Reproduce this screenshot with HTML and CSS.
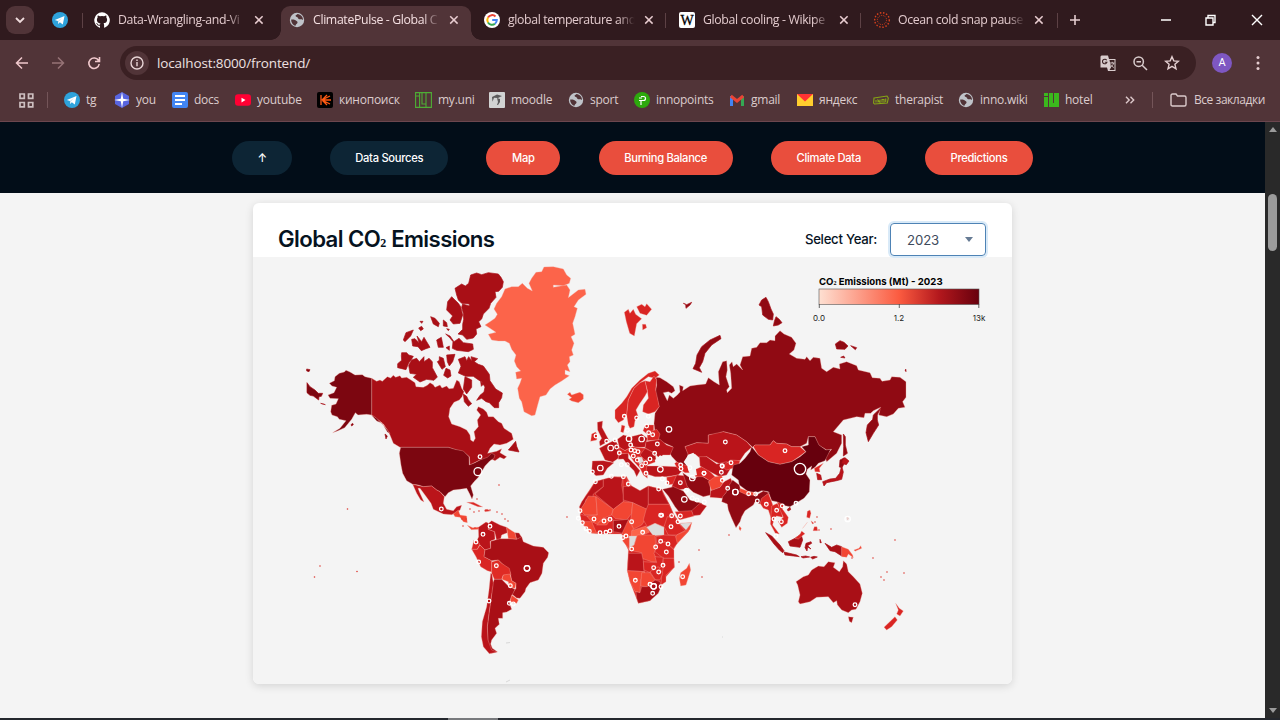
FILE: index.html
```html
<!DOCTYPE html>
<html lang="en">
<head>
<meta charset="utf-8">
<title>ClimatePulse - Global CO₂ Emissions</title>
<link rel="stylesheet" href="styles.css">
</head>
<body>
<svg width="0" height="0" class="defs">
  <defs>
    <symbol id="x" viewBox="0 0 10 10"><path d="M1.2 1.2l7.4 7.4M8.6 1.2L1.2 8.6" stroke="currentColor" stroke-width="1.5"/></symbol>
    <symbol id="tg" viewBox="0 0 16 16"><circle cx="8" cy="8" r="8" fill="#2ea3dc"/><path d="M2.800 7.900l9.700-4-1.700 8.700-3-2.300-1.600 1.600-.3-2.800z" fill="#fff"/><path d="M6 9l4-3.200-3.200 3.800-.6 1.800z" fill="#b9d8ea"/></symbol>
    <symbol id="globe" viewBox="0 0 16 16"><circle cx="8" cy="8" r="7.200" fill="#bfc3c9"/><path d="M2.200 7.500c2 0 3.500-.2 4.300.8s2.300.7 2 2.400c-.3 1.500-1.800 1-2 3-2.600-.6-4.500-3.200-4.300-6.200zM8.500 2c-1 1.200-2.300 1-1.800 2.200s2.200.5 2.300 1.800 1.800 1.400 3 1.200 1.300.9 2 .5C14 5 11.800 2.400 8.500 2z" fill="#513438"/></symbol>
  </defs>
</svg>
<header class="browser">
  <div class="tabs">
    <button class="tabmenu"><svg width="10" height="8" viewBox="0 0 10 8"><path d="M1 2l4 4 4-4" fill="none" stroke="#f0dcdd" stroke-width="1.800"/></svg></button>
    <svg class="pinned" width="16" height="16"><use href="#tg"/></svg>
    <div class="tab first"><svg width="16" height="16" viewBox="0 0 16 16"><path fill="#fff" d="M8 .2a8 8 0 0 0-2.500 15.500c.4.1.5-.2.5-.4v-1.600c-2.200.5-2.700-.9-2.700-.9-.4-.9-.9-1.200-.9-1.200-.7-.5.100-.5.100-.5.800.1 1.200.8 1.200.8.700 1.300 1.900.9 2.300.7.100-.5.300-.9.500-1.100-1.800-.2-3.600-.9-3.600-3.900 0-.9.300-1.600.8-2.100-.1-.2-.4-1 .1-2.100 0 0 .7-.2 2.200.8a7.500 7.500 0 0 1 4 0c1.500-1 2.200-.8 2.200-.8.400 1.100.2 1.900.1 2.100.5.600.8 1.300.8 2.100 0 3-1.800 3.700-3.600 3.900.3.300.6.800.6 1.500v2.300c0 .2.100.5.500.4A8 8 0 0 0 8 .2z"/></svg><span>Data-Wrangling-and-Vi</span><svg class="close" width="10" height="10"><use href="#x"/></svg></div>
    <div class="tab active"><svg width="16" height="16"><use href="#globe"/></svg><span>ClimatePulse - Global C</span><svg class="close" width="10" height="10"><use href="#x"/></svg></div>
    <div class="tab"><svg width="16" height="16" viewBox="0 0 16 16"><circle cx="8" cy="8" r="8" fill="#fff"/><g fill="none" stroke-width="2"><path d="M11.500 4.500A4.800 4.800 0 0 0 4 5.500" stroke="#ea4335"/><path d="M4 5.500a4.800 4.800 0 0 0 0 5" stroke="#fbbc05"/><path d="M4 10.500a4.800 4.800 0 0 0 7 1.200" stroke="#34a853"/><path d="M11 11.700A4.800 4.800 0 0 0 12.800 8H8.200" stroke="#4285f4"/></g></svg><span>global temperature and</span><svg class="close" width="10" height="10"><use href="#x"/></svg></div>
    <div class="tab sep"><svg width="16" height="16" viewBox="0 0 16 16"><rect width="16" height="16" rx="2" fill="#fff"/><text x="8" y="13" text-anchor="middle" class="wiki">W</text></svg><span>Global cooling - Wikipe</span><svg class="close" width="10" height="10"><use href="#x"/></svg></div>
    <div class="tab sep"><svg width="16" height="16" viewBox="0 0 16 16" fill="none" stroke="#d8401c"><circle cx="8" cy="8" r="7.300" stroke-width="1.400" stroke-dasharray="1.500 1.700"/><circle cx="8" cy="8" r="4.600" stroke-dasharray="1 1"/></svg><span>Ocean cold snap pause</span><svg class="close" width="10" height="10"><use href="#x"/></svg></div>
    <div class="newtab"><svg width="12" height="12" viewBox="0 0 12 12"><path d="M6 1v10M1 6h10" stroke="#e5cdd0" stroke-width="1.600"/></svg></div>
    <div class="window"><svg width="104" height="14" viewBox="0 0 104 14" fill="none" stroke="#fff" stroke-width="1.400"><path d="M1 7h10M46 5h7v7h-7zM48 4.500V2.500h7v7h-1.500M92 2l10 10M102 2L92 12"/></svg></div>
  </div>
  <div class="toolbar">
    <div class="controls">
      <svg width="14" height="14" viewBox="0 0 14 14" fill="none" stroke="#f0c8cc" stroke-width="1.500"><path d="M13 7H2M7 1.500L1.500 7 7 12.500"/></svg>
      <svg width="14" height="14" viewBox="0 0 14 14" fill="none" stroke="#967376" stroke-width="1.500"><path d="M1 7h11M7 1.500L12.500 7 7 12.500"/></svg>
      <svg width="14" height="14" viewBox="0 0 14 14" fill="none" stroke="#f0c8cc" stroke-width="1.600"><path d="M11.500 4.500A5.200 5.200 0 1 0 12.200 8M12.500 1v4.500H8"/></svg>
    </div>
    <div class="address">
      <i><svg width="14" height="14" viewBox="0 0 14 14" fill="none" stroke="#e8d5d6" stroke-width="1.400"><circle cx="7" cy="7" r="6"/><path d="M7 6v4.200M7 3.500V5"/></svg></i>
      <span class="url">localhost:8000/frontend/</span>
      <div class="actions">
        <svg width="17" height="17" viewBox="0 0 17 17"><path d="M1.500.5H8L9 4h6.500v12H8l-1-3.500H.5V1.500z" fill="#d9cccd"/><path d="M9.500 5h5v10H9.500l1.500-2.500z" fill="#3a2023"/><path d="M6.700 5.200A2.300 2.300 0 1 0 7 7.200H4.800" fill="none" stroke="#3a2023" stroke-width="1.100"/><path d="M10 8h4.500M12.200 6.800V8M13.500 8c0 2-2 3.500-3 4M10.800 9.500c.5 1.500 2 2.500 3 3" fill="none" stroke="#d9cccd" stroke-width=".9"/></svg>
        <svg width="15" height="15" viewBox="0 0 15 15" fill="none" stroke="#d9cccd" stroke-width="1.500"><circle cx="5.700" cy="5.700" r="4.700"/><path d="M9.200 9.200L14 14M3.500 5.700H8"/></svg>
        <svg width="16" height="16" viewBox="0 0 16 16" fill="none" stroke="#e5d0d2" stroke-width="1.400"><path d="M8 1.700l1.800 4.200 4.600.4-3.500 3 1.100 4.500L8 11.400l-4 2.400 1.100-4.500-3.500-3 4.600-.4z"/></svg>
      </div>
    </div>
    <b class="avatar">A</b>
    <svg class="dots" width="4" height="16" viewBox="0 0 4 16" fill="#e5cdd0"><circle cx="2" cy="2.500" r="1.500"/><circle cx="2" cy="8" r="1.500"/><circle cx="2" cy="13.500" r="1.500"/></svg>
  </div>
  <div class="bookmarks">
    <a class="apps"><svg width="15" height="15" viewBox="0 0 15 15" fill="none" stroke="#cdbfc0" stroke-width="1.700"><path d="M1 1h4.300v4.300H1zM9.500 1h4.300v4.300H9.500zM1 9.500h4.300v4.300H1zM9.500 9.500h4.300v4.300H9.500z"/></svg></a>
    <a><svg width="16" height="16"><use href="#tg"/></svg><span>tg</span></a>
    <a><svg width="16" height="16" viewBox="0 0 16 16"><path d="M8 0l7 4v8l-7 4-7-4V4z" fill="#5865e0"/><path d="M8 0l1.200 6.800L16 8l-6.800 1.200L8 16 6.800 9.200 0 8l6.800-1.200z" fill="#fff"/></svg><span>you</span></a>
    <a><svg width="16" height="16" viewBox="0 0 16 16"><rect width="16" height="16" rx="2" fill="#4285f4"/><path d="M3 4h10M3 8h10M3 12h7" stroke="#fff" stroke-width="2"/></svg><span>docs</span></a>
    <a><svg width="16" height="16" viewBox="0 0 16 16"><rect y="2.300" width="16" height="11.500" rx="3" fill="#ff0033"/><path d="M6.500 5.700v4.700l4-2.350z" fill="#fff"/></svg><span>youtube</span></a>
    <a><svg width="16" height="16" viewBox="0 0 16 16"><rect width="16" height="16" rx="2" fill="#000"/><path d="M4 3v10M5 8l5-5M5 8l5 5M5 8l8-4M5 8l8 4M5 8h9" stroke="#ff5a13" stroke-width="1.300"/></svg><span>кинопоиск</span></a>
    <a><svg width="17" height="16" viewBox="0 0 17 16" fill="none" stroke="#4eae35" stroke-width="1.100"><path d="M.6.600h15.800v14.800H.6zM.6 4h4v11.400M4.600.600V4M7 .600v11.400h4V.600M11 .600v15"/></svg><span>my.uni</span></a>
    <a><svg width="16" height="16" viewBox="0 0 16 16"><rect width="16" height="16" rx="1" fill="#d2d3d3"/><path d="M3 5l5-2.500L13 4l-4 2-4-.2-1.500 4zM8 6l3 1v3l-2 3H8l1-3z" fill="#5c5b5c"/></svg><span>moodle</span></a>
    <a><svg width="16" height="16"><use href="#globe"/></svg><span>sport</span></a>
    <a><svg width="16" height="16" viewBox="0 0 16 16"><circle cx="8" cy="8" r="8" fill="#2da90d"/><path d="M7 13V8M7 4.500h2.500a2 2 0 0 1 0 4H5M5 6h3" fill="none" stroke="#fff" stroke-width="1.200"/></svg><span>innopoints</span></a>
    <a><svg width="16" height="16" viewBox="0 0 16 16" fill="none" stroke-width="3"><path d="M2.500 14V4" stroke="#4285f4"/><path d="M13.500 14V4" stroke="#34a853"/><path d="M1.800 4L8 9l6.200-5" stroke="#ea4335"/></svg><span>gmail</span></a>
    <a><svg width="16" height="16" viewBox="0 0 16 16"><path d="M0 2h16v12H0z" fill="#ffce2e"/><path d="M0 2h16L8 9.500z" fill="#f33"/></svg><span>яндекс</span></a>
    <a><svg width="16" height="16" viewBox="0 0 16 16" fill="none" stroke="#86a714" stroke-width="1.100"><path d="M1 6l13-2 1.300 2-1 5-12.800 1L.6 11zM3 10.500V8M5 10.500V8l2 2.500V7.500M9 10.500v-3h2v3M12.700 10V6.500"/></svg><span>therapist</span></a>
    <a><svg width="16" height="16"><use href="#globe"/></svg><span>inno.wiki</span></a>
    <a><svg width="15" height="16" viewBox="0 0 15 16"><path d="M0 1h4v3H0zM0 5h4v10H0zM5 1h4v10h1V1h5v14H5z" fill="#3bb81d"/></svg><span>hotel</span></a>
    <a class="more"><svg width="10" height="8" viewBox="0 0 10 8" fill="none" stroke="#ddc9cb" stroke-width="1.400"><path d="M1 .8L4.200 4 1 7.200M5.500.8L8.700 4 5.500 7.200"/></svg></a>
    <a class="all"><svg width="17" height="14" viewBox="0 0 17 14" fill="none" stroke="#dac9ca" stroke-width="1.400"><path d="M1 2.500Q1 1 2.500 1H6l1.500 2h7Q16 3 16 4.500v7q0 1.500-1.500 1.500h-12Q1 13 1 11.500z"/></svg><span>Все закладки</span></a>
  </div>
</header>
<div class="viewport">
<main>
  <nav>
    <a class="dark">↑</a><a class="dark">Data Sources</a><a>Map</a><a>Burning Balance</a><a>Climate Data</a><a>Predictions</a>
  </nav>
  <section class="card">
    <div class="cardhead">
      <h1>Global CO<small>2</small> Emissions</h1>
      <label>Select Year:</label>
      <div class="select">2023<svg width="8" height="5"><path d="M0 0h8L4 5z" fill="#667b94"/></svg></div>
    </div>
    <svg class="map" viewBox="253 257 759 427">
      <defs>
        <linearGradient id="reds"><stop stop-color="#fee0d2"/><stop offset=".5" stop-color="#fb5b40"/><stop offset=".75" stop-color="#b3181d"/><stop offset="1" stop-color="#67000d"/></linearGradient>
        <marker id="s" markerUnits="userSpaceOnUse" markerWidth="20" markerHeight="20" refX="10" refY="10"><circle cx="10" cy="10" r="5.500" fill="none" stroke="#fff" stroke-width="3.800"/></marker>
        <marker id="m" markerUnits="userSpaceOnUse" markerWidth="30" markerHeight="30" refX="15" refY="15"><circle cx="15" cy="15" r="8.300" fill="none" stroke="#fff" stroke-width="3.600"/></marker>
      </defs>
      <g class="land c" transform="translate(300 260) scale(.33333)">
        <path d="M215 355L230 364 240 360 247 364 262 350 272 354 280 346 287 352 300 347 305 354 320 352 333 360 345 368 348 380 370 382 382 376 390 368 400 374 405 382 420 375 426 384 440 378 447 386 460 385 466 370 470 360 478 365 485 385 492 395 486 410 478 420 462 427 450 445 446 470 455 492 480 500 500 510 510 525 512 540 520 545 526 535 522 515 535 500 532 480 542 465 530 450 535 440 550 447 560 457 565 470 580 470 595 485 605 490 612 505 635 520 640 538 620 550 600 555 582 552 570 565 563 580 590 574 605 566 600 578 620 590 612 597 600 592 585 602 570 595 540 600 510 615 508 590 490 575 470 570 445 562 300 562 280 550 270 525 262 510 250 492 235 480 215 465z"/>
        <path class="us" d="M215 355L195 350 187 344 165 345 150 336 138 331 133 336 118 340 105 350 103 362 88 370 96 378 110 382 102 398 84 405 90 415 115 416 108 432 95 436 92 455 96 465 112 470 118 478 138 482 120 505 98 518 114 512 134 503 155 478 166 458 174 465 200 463 215 465 230 475 250 495 270 520 262 516 247 490 230 483 215 466z"/>
        <g class="isle"><path class="us" d="M21 368L30 380 45 390 55 400 68 400 64 409 57 410 56 420 40 408 30 406 21 398zM20 327l10 2-3 6-7-2zM62 430l14 4zM153 494l5-4 2 4-5 4zM255 522l7 6-4 9z"/>
        <path d="M512 45L530 39 545 44 565 38 595 42 603 52 610 65 607 82 596 94 585 95 588 112 572 130 567 145 550 162 545 177 536 185 543 200 528 207 530 222 520 234 500 238 488 225 474 222 488 208 488 193 491 178 490 160 485 142 488 132 508 138 508 132 485 130 475 120 470 105 465 85 485 72 496 78 506 70zM455 110L475 130 482 140 488 165 480 190 460 192 450 180 458 168 440 150 443 125zM392 170L405 175 418 190 415 200 400 192zM430 180l10 8 2 12-12-2zM310 240l8-22 22-8-8 18-17 17zM335 238l10-2 12 12-6-20 14 17 7-13 8 13 10 17-14 5-12 5-10-12-16-2zM356 204l9-5 5 8-8 5zM360 184l9 0-4 6zM410 240l14-8 6 30-15 0zM438 263l10-5v13zM437 222l13 6 12 17 15-10 13 13 28 4 2 16-15 7-35-4-13-6 2-20-10-12zM305 278l15 0 6 7 14 4-6 10-8 10-8 20-25-6 0-12 12-10-1-14zM335 300l15-5 8 10 14-15 0 15 15-10 10 10 0 18 15 28-10 10-22-3-20 8-20-14 10-9-20-3-4-24zM418 290l12 5 6 25-10 8-14-23 6-4zM440 285l25-2-7 22-10 13-6-13zM438 325l12 5 3 18-10 6-12-8zM475 298l20-8 5 12 6-12 10 14-3-14 20 6-10 9 12 8 15 5 18 25 2 19 17 25 20 12-2 14-9 15 0 15-13 0-15-15-10-3-13-10-15 6 10-15 12-10 3-15-10-15-15-10-10-7-23 0-22-10 8-20zM495 350l20 10 0 22-15 20-10-15zM490 402l10 7 5 10 10 12-10 8-12-14zM637 556l10-12 3 15 7 17-16-3-16-3zM542 365l8 8-6 6zM440 206l8 2-3 4z"/></g>
      </g>
      <g class="land c" transform="translate(400 440) scale(.33333)">
        <path class="us" d="M2 22H145L165 28 190 33 207 50 208 75 225 68 240 60 262 52 275 40 285 45 282 55 270 62 255 78 245 95 235 112 222 125 212 138 220 165 216 177 208 160 200 145 180 148 160 150 145 158 135 170 120 155 110 150 95 138 70 140 55 135 38 133 20 122 8 100 3 75 -2 40z"/>
        <path class="a" d="M38 133L70 140 95 138 110 150 120 155 133 170 130 190 140 208 160 212 170 200 185 196 180 210 168 218 155 224 130 222 100 208 93 190 75 165 60 145 54 145 60 160 72 186 62 180 50 160z"/>
        <path class="e" d="M160 222l15-12 5 15 20 3 2 20-12-3-10-13-15-2zM202 256l16 7 20-2-2 7-22 1z"/><path class="b" d="M200 187l20 0 28 14-14-1-22-9zM253 210l10-2 8 5-16 2z"/>
        <path class="a" d="M235 262L258 246 266 250 265 268 284 275 285 298 270 304 272 325 255 330 240 315 228 308 236 290z"/><path class="a" d="M266 250L275 242 300 255 320 262 322 278 305 285 302 296 290 302 284 275 265 268z"/><path class="e" d="M320 262L345 278 350 298 325 296z"/><path d="M345 278L357 279 366 293 350 298z"/><path class="b" d="M222 300L240 312 232 328 215 328z"/><path class="b" d="M215 328L232 328 240 315 255 330 252 350 275 362 275 396 262 392 242 380 228 350z"/>
        <path d="M272 304L300 296 325 296 350 298 365 290 370 305 400 318 430 322 446 338 443 352 430 370 426 400 415 420 390 428 378 445 375 455 360 475 350 474 335 462 348 445 348 430 335 422 330 395 305 370 295 360 275 362 252 350 255 330 272 325z"/>
        <path class="e2" d="M275 366L295 360 305 370 328 385 333 405 310 405 305 418 283 418 275 400z"/><path class="e" d="M310 405L330 402 335 422 348 430 345 445 328 442 325 425 306 418z"/>
        <path d="M283 418L305 418 325 438 345 448 335 468 328 488 335 508 320 516 308 518 308 535 295 535 298 553 285 565 290 580 275 600 272 612 277 625 292 635 275 640 264 615 262 560 267 520 274 470 278 430z"/><path class="a" d="M272 400L276 402 280 430 274 470 267 520 262 560 264 600 275 630 292 636 268 641 250 620 244 590 247 545 260 500 267 450z"/><path class="e" d="M335 465L355 480 350 490 330 488z"/>
      </g>
      <g class="land gl" transform="translate(470 255) scale(.33333)">
        <path d="M45 210L60 200 75 190 82 178 72 162 80 145 95 125 105 102 125 95 145 95 157 85 172 100 187 108 177 85 185 70 198 52 215 50 222 36 250 35 280 42 290 60 302 70 298 85 280 92 250 90 250 97 290 90 300 105 295 128 325 105 345 103 348 118 325 135 312 155 322 160 315 185 308 205 315 238 303 245 312 265 305 285 310 300 298 305 300 320 292 330 300 350 285 345 285 358 298 362 275 378 255 390 240 402 228 420 210 425 203 450 195 480 185 482 162 470 155 440 148 430 143 400 150 385 155 370 140 372 137 352 152 348 140 335 133 318 138 300 125 283 118 265 105 258 85 258 65 255 55 238 78 232 60 220z"/>
        <path class="e" d="M292 418l8-6 5 8 15-5 10-3 10 7 0 13-15 11-20-5-8-5 8-5z"/><path class="b" d="M463 172l12-9 5 12 10-12 7 15 18 13-15 15-7 37-14-8-10-35zM500 155l15-7 10 7 5-9 15 17-15 18-20-6zM517 208l10 0 3 10-12 7z"/>
      </g>
      <g class="land ru" transform="translate(640 290) scale(.33333)">
        <path d="M48 262L60 263 80 275 100 290 105 302 95 310 85 305 70 308 82 332 88 315 100 325 112 315 120 306 118 285 130 290 128 302 150 288 170 285 197 282 205 263 222 275 238 285 235 245 248 215 260 212 262 240 258 260 268 290 260 300 262 308 275 295 272 250 268 225 276 215 280 230 290 222 308 240 300 225 308 200 330 198 335 175 350 172 360 158 380 158 390 150 405 152 405 138 420 122 432 132 455 142 468 160 462 180 448 192 470 205 495 208 500 200 510 212 520 202 540 205 545 235 560 245 580 232 600 237 598 222 620 215 650 227 655 240 690 248 697 263 720 265 726 274 750 270 755 260 780 262 798 275 798 322 788 335 795 352 775 355 760 372 740 380 716 375 722 352 700 362 692 370 675 370 672 383 650 380 610 390 580 425 605 435 605 460 590 490 560 515 555 500 575 478 560 480 535 465 525 440 505 440 500 460 480 470 455 470 440 462 410 460 400 452 390 465 345 465 338 472 320 455 290 435 250 425 230 432 205 435 205 460 170 458 135 470 145 490 140 510 148 530 125 528 110 515 96 500 82 480 98 470 75 460 60 455 45 430 42 400 45 370 57 350 50 320 45 310 50 285z"/>
        <g class="isle"><path d="M722 354L712 375 712 390 716 405 700 430 685 455 678 428 682 405 698 388 700 375zM610 432l6 8 0 25 6 25-12 8 1-28zM600 510l12-6 12 8-10 6-8 15-8-2zM240 136l3 10-28 19-20 25-7 25-10 18 7 14-26-11 8-16 4-25 14-25 25-20zM378 22l7 13 8 22 7 15-2 18-13-2-17-13-3-25-8-5 8-15zM408 80l10 8 8 10-11 7-15 3 3-14zM130 40l10 4 15-7-5 8-12 10-1-12zM586 162l14-10 12 5 12 11-9 10-25-1zM632 167l18 6-4 6zM602 202l9-4 4 6zM795 240l3-2v7z"/></g>
        <path class="a" d="M135 470L170 458 205 460 205 435 250 425 290 435 320 455 335 472 315 490 300 512 270 515 240 522 225 515 200 500 180 505 165 492 145 495z"/>
        <path class="b" d="M340 470L345 465 390 465 400 452 410 460 440 462 455 470 480 470 497 485 480 498 455 515 420 523 385 515 355 495z"/>
      </g>
      <g class="land a" transform="translate(560 360) scale(.33333)">
        <path class="b" d="M165 150L185 130 200 110 215 85 240 60 265 40 285 33 298 45 285 55 265 50 240 68 222 85 205 120 200 165 190 180 175 188 165 175z"/><path class="b" d="M255 62L240 68 222 85 205 120 200 165 205 195 210 205 222 200 225 182 235 170 228 150 240 130 255 108 262 95 258 75z"/><path class="b" d="M255 62L270 65 282 48 290 60 287 90 298 140 285 155 265 162 248 155 250 135 265 115 262 90z"/>
        <path d="M112 187L128 183 126 202 140 228 148 242 120 258 118 245 125 235 113 210z"/><path class="b" d="M95 222l12-6 5 8-2 16-18 4zM185 195l10 3-5 20-8-3z"/>
        <path d="M118 265L145 250 165 240 178 262 175 295 158 307 135 300z"/><path d="M97 303L130 302 162 308 142 325 130 345 108 347 95 335z"/><path d="M172 238L190 225 212 230 215 260 195 272 178 262z"/><path d="M212 230L245 222 262 235 255 262 225 262 215 255z"/><path d="M175 282L205 278 205 295 228 318 240 332 230 350 222 332 198 308 190 297 175 298z"/><path class="b" d="M256 195l25 0 0 22-20 5-12-10z"/><path class="b" d="M262 218L290 208 300 222 295 240 262 242z"/><path d="M258 245L300 238 320 255 340 262 330 285 308 285 300 298 285 280 270 275 255 265z"/>
        <path class="b" d="M178 262L195 272 215 260 258 265 285 280 288 305 262 315 262 355 250 345 240 325 222 305 205 280 175 282z"/><path d="M255 265L285 280 288 300 255 300 240 285z"/><path class="grey" d="M232 290l14 2 5 13-14 7z"/>
        <path d="M260 318L300 318 350 320 368 330 355 345 320 350 285 350 260 342z"/><path class="b" d="M340 303L360 310 388 320 390 338 375 338 350 322z"/>
        <path class="b" d="M320 352L355 345 342 372 322 375z"/><path d="M350 345L375 347 385 385 355 390 335 380z"/>
        <path class="ru" d="M368 338L385 350 400 358 420 345 450 362 452 405 430 410 400 397 382 380z"/><path class="b" d="M402 330L425 320 445 330 470 355 458 368 430 350 402 350z"/><path d="M418 290L440 290 470 312 500 305 512 325 500 345 478 350 450 335 420 318z"/><path class="b" d="M485 320L512 300 540 302 535 320 500 330z"/>
        <path class="ru" d="M308 388L340 380 370 393 390 420 425 430 432 445 400 455 368 470 345 440 325 408z"/><path class="b" d="M345 455l50-3 8 16-45 12z"/><path d="M420 430l20 8-20 27-20 2-5-15z"/>
        <path class="f" d="M385 284l15-6 9 12-8 15 6 18 4 22-16 5-10-18-2-12-12-14zM285 300l15-14 20 8 12-7 3 8 14 12-15 9-25-3-22 2z"/>
      </g>
      <g class="land e" transform="translate(560 470) scale(.33333)">
        <path class="b" d="M105 35L160 20 200 20 215 48 240 62 265 48 305 58 328 103 340 130 358 160 395 158 385 185 350 222 340 240 343 292 318 320 303 350 270 392 235 400 210 335 202 302 205 240 188 205 185 192 120 192 65 160 60 120 75 80z"/>
        <path class="a" d="M105 35L130 28 130 50 100 72 98 85 78 88 75 98 60 125 58 110 65 95 90 60z"/><path class="a" d="M130 28L160 20 188 22 185 45 190 75 190 95 160 118 105 72 130 50z"/><path class="b" d="M188 20l12 0 5 30-15 5z"/><path class="a" d="M190 50L215 48 240 62 265 48 265 122 218 98 190 90z"/><path class="a" d="M265 48L305 58 312 75 328 103 265 103z"/>
        <path d="M75 98L85 78 108 80 112 135 75 135 60 120z"/><path d="M108 80L160 118 155 135 130 145 110 165 90 155 80 138 112 135z"/><path d="M160 118L190 95 218 98 215 130 200 150 165 145 155 135z"/><path d="M218 98L262 118 255 150 245 165 220 178 212 150 215 130z"/><path class="b" d="M265 103L328 103 340 130 325 155 310 170 285 160 262 170 250 150 258 120z"/>
        <path class="b" d="M60 132L80 138 95 155 110 162 130 145 160 150 160 188 120 192 95 190 65 160z"/><path d="M65 155L95 155 110 190 90 188zM110 165L130 145 150 150 140 165z"/><path class="c" d="M160 152L205 148 208 165 188 190 160 185z"/><path d="M205 150L220 175 215 200 190 197 187 188z"/><path class="gl" d="M215 182L258 168 268 187 240 198 215 205z"/>
        <path class="grey" d="M260 172L285 160 312 172 312 195 280 197z"/><path class="grey" d="M358 160L395 158 378 180z"/><path class="b" d="M322 140L350 145 360 165 375 182 350 195 325 195 312 170z"/><path d="M395 158L390 178 350 222 345 205 350 195 378 182z"/><path class="b" d="M288 200L312 195 346 197 352 220 340 236 315 215 290 220z"/>
        <path d="M232 195L285 195 288 235 282 250 292 275 275 275 245 265 245 248 205 240 222 225z"/><path class="grey" d="M208 198l22 0-8 27-17 10-5-22z"/><path d="M188 203l20 0 0 35-20-25z"/><path class="b" d="M290 222L315 216 342 240 342 265 310 265 285 245z"/>
        <path class="a" d="M205 250L245 250 250 272 252 305 202 302z"/><path class="b" d="M250 275L290 278 285 260 310 262 305 290 270 308 252 300z"/><path class="b" d="M310 265L342 265 343 292 318 315 318 335 303 345 305 320 310 290z"/><path class="b" d="M270 305L295 290 308 310 300 330 285 328z"/><path d="M202 302L255 305 242 330 240 368 225 365 210 335z"/><path d="M245 308L270 308 285 330 260 350 242 348z"/><path class="c" d="M228 365L240 368 245 350 262 350 285 330 300 335 303 350 295 370 270 392 235 400 230 385z"/><path d="M388 280L392 300 378 345 362 348 358 325 362 308 380 295z"/>
      </g>
      <g class="land a" transform="translate(700 430) scale(.33333)">
        <path class="e" d="M25 155L45 140 65 137 72 155 60 172 35 182z"/><path d="M32 182L60 172 72 155 92 145 98 158 78 190 68 205 30 202z"/>
        <path class="ch" d="M97 120L100 105 120 100 135 85 150 65 155 50 175 75 205 95 240 103 275 95 300 80 318 65 305 50 325 45 325 20 345 20 357 45 378 60 392 58 375 92 355 100 345 112 332 120 335 108 322 118 318 132 330 150 328 185 312 205 290 218 270 230 245 225 230 215 215 212 205 185 185 182 170 188 145 185 118 165 115 150 95 135z"/>
        <path class="ru" d="M65 215L68 200 78 188 88 165 98 150 118 165 122 180 145 192 170 195 190 183 208 188 190 205 180 222 165 215 160 225 135 242 125 260 120 275 108 293 95 265 85 240 82 222z"/><path class="e" d="M120 175l28 10 18 3-2 8-25-2-20-9z"/>
        <path class="b" d="M185 205L205 190 215 215 222 235 215 245 220 278 212 262 205 240 190 235 180 220z"/><path class="b" d="M215 228L232 220 245 245 248 262 230 258 222 265 218 285 238 312 226 310 211 282z"/><path class="b" d="M232 216L250 223 248 238 265 262 262 280 245 292 235 275 250 262 240 240z"/>
        <path class="b" d="M343 115L370 100 358 115 360 126 345 125z"/>
        <g class="isle"><path d="M350 130l12 5 3 14-12 0zM430 85l5-2 12 10-8 11-14-4zM425 108l5 18-5 22-15 4-30 6-8 10-4-13 22-8 17-2 12-15zM262 238l8-6 2 7-8 4z"/>
        <path class="c" d="M197 308L215 318 240 345 252 362 248 368 238 360 222 342zM252 366L290 375 298 380 255 375zM265 335L285 325 303 312 308 330 300 352 270 348zM318 340l15-5 2 5-12 7 10 10-10-6-2 12-6-10zM375 340L395 352 410 345 425 350 425 378 405 365 390 362zM303 380l14-2 12 3-20 3zM332 382l10-3 10 2-14 6zM360 328l4 10-4 0z"/></g><path class="b" d="M285 325l15-12 5-10 10 8-10 8-10 8zM322 244l8-4 3 10-4 15-9-3zM333 272l9 8-5 2zM343 290l8 0 2 12-14 0zM308 295l14-18z"/><path class="e" d="M425 350L445 358 458 375 460 383 445 372 440 382 425 380zM462 360l15-5 5-8 3 8-20 9zM118 288l6 7-3 7-4-5z"/>
        <path class="c" d="M293 465L288 455 310 440 325 435 335 420 355 408 372 410 385 395 405 398 400 412 418 425 428 410 430 392 440 402 445 425 460 440 480 462 487 490 480 515 468 538 455 540 445 548 425 540 412 524 410 512 400 518 385 500 350 502 330 515 300 522 295 515 300 495zM445 560L460 562 455 578 448 574z"/><path class="b" d="M587 520L598 535 610 543 600 558 590 552 595 540zM585 560L592 570 575 590 560 600 552 592z"/>
        <path class="grey" d="M440 262l6 2-3 6z"/>
      </g>
      <g class="pins" transform="translate(560 360) scale(.33333)">
        <path class="sm" d="M193 169L230 174 265 169 260 198 202 211 266 218 278 224 292 252 270 297 284 280 140 244 165 240 170 261 178 279 212 255 213 270 224 272 234 275 220 288 232 300 257 309 245 317 202 314 184 314 108 228 97 336 106 365 154 349 190 350 205 372 258 340 307 357 321 369 296 387 361 368 379 391 397 414 411 420 433 426 362 315 363 326 390 323 432 340 487 319 484 337 487 361 305 466 335 467 354 485 496 246"/>
        <path class="md" d="M327 208L207 236 245 237 152 264 121 324 301 328 397 354 373 418"/>
      </g>
      <g class="pins" transform="translate(560 470) scale(.33333)"><path class="sm" d="M102 147L132 153 150 148 177 169 215 155 248 187 188 203 198 198 215 237 302 136 333 170 302 214 324 222 287 231 319 246 281 293 309 286 296 306 226 331 270 343 303 350 278 370 368 320 361 138 60 122 55 145 67 158 78 176 88 184 120 188 138 187 150 183"/><path class="md" d="M281 349L281 349"/></g>
      <g class="pins" transform="translate(700 430) scale(.33333)"><path class="sm" d="M255 62L93 98 66 107 83 175 146 191 167 192 172 213 199 223 230 241 247 228 222 267 228 318 244 275 288 220 465 524 12 130"/><path class="md" d="M106 186L106 186"/><circle cx="300" cy="117" r="17"/><circle cx="443" cy="267" r="8"/></g>
      <g class="pins" transform="translate(400 440) scale(.33333)"><path class="sm" d="M240 50L249 283 270 259 228 306 236 366 289 377 331 437 328 490 267 483 340 492 124 207"/><path class="md" d="M381 385L381 385"/><circle cx="234" cy="95" r="12"/></g>
      <path class="islands" d="M347.500 509h0M320 566h0M314.500 577h0M357 571.500h0M499 485h0M567 517h0M466 519h0M470 509h0M474 512h0M479 511h0M486 510h0M490 510h0M497 512h0M502 514h0M505 519h0M508 521h0M477 499h0M459 515h0M462 519h0M463 526h0M475 528h0M699 550h0M702 577h0M679 562h0M729 535h0M831 529h0M895 540h0M904 573h0M887 572h0M881 577h0M884 580h0M873 558h0M852 558h0M819 530h0M815 522h0M817 517h0"/>
      <path class="antarctic" d="M506 643l4-.5M506 682l4-2M722 637h1"/>
      <g class="legend"><text x="819" y="285" class="legendtitle">CO<tspan class="sub">2</tspan> Emissions (Mt) - 2023</text><rect x="819" y="289" width="160" height="15.500" fill="url(#reds)" stroke="#555" stroke-width=".6"/><path d="M819.300 304v4M899.300 304v4M978.800 304v4" stroke="#444" stroke-width=".8"/><g text-anchor="middle" class="ticks"><text x="819" y="321">0.0</text><text x="899" y="321">1.2</text><text x="979" y="321">13k</text></g></g>
    </svg>
  </section>
</main>
<aside class="scrollbar"><i class="up"></i><i class="thumb"></i><i class="down"></i></aside>
</div>
<footer class="edge"></footer>
</body>
</html>
```
FILE: styles.css
```css
*{box-sizing:border-box}
body{margin:0;width:1280px;height:720px;overflow:hidden;display:flex;flex-direction:column;background:#f4f4f4;font-family:Inter,"Liberation Sans",sans-serif}
svg{flex:none;display:block}
.defs{position:absolute}
.browser{height:122px;flex:none;background:#513438;border-bottom:1px solid #6b464e;font-family:"Open Sans","Noto Sans",sans-serif;color:#e2cacd}
.tabs{height:40px;background:#301a1e;display:flex;align-items:center;position:relative}
.tabmenu{width:28px;height:28px;margin-left:6px;border:0;border-radius:9px;background:#513438;display:grid;place-items:center;padding:0}
.pinned{margin-left:18px}
.tab{width:195px;height:34px;align-self:flex-end;display:flex;align-items:center;padding:0 16px 6px 9px;font-size:12.3px;position:relative}
.tab span{width:128px;height:18px;line-height:18px;margin-left:8px;white-space:nowrap;letter-spacing:-.36px;-webkit-mask-image:linear-gradient(90deg,#000 86%,transparent 99%);mask-image:linear-gradient(90deg,#000 86%,transparent 99%)}
.tab .close{margin-left:auto;color:#e8ccd0}
.tab.first{width:198px;margin-left:14px;padding-left:12px;padding-right:16px}
.tab.first:before,.tab.sep:before,.newtab:before{content:"";position:absolute;left:0;top:7px;height:15px;width:1px;background:#5d4145}
.tab.sep:before{left:-5px}
.tab.active{background:#513438;border-radius:9px 9px 0 0;width:190px;margin-left:1px;padding-left:8px;padding-right:12px}
.tab.active span{color:#f5e0e2}
.tab.active:before,.tab.active:after{content:"";position:absolute;bottom:0;width:10px;height:10px}
.tab.active:before{left:-10px;background:radial-gradient(circle at 0 0,#301a1e 9.5px,#513438 10px)}
.tab.active:after{right:-10px;background:radial-gradient(circle at 100% 0,#301a1e 9.5px,#513438 10px)}
.tab.active + .tab{width:199px;padding-left:13px;padding-right:16px}
.wiki{font:14px "Liberation Serif",serif;stroke:#000;stroke-width:.3px}
.newtab{position:relative;margin-left:2px;padding-left:7px}
.newtab:before{top:-1px;left:-5px}
.window{margin-left:auto;padding-right:16px}
.toolbar{height:46px;display:flex;align-items:center}
.controls{display:flex;gap:22px;width:120px;padding-left:15px}
.address{height:34px;width:1076px;background:#3a2023;border-radius:17px;display:flex;align-items:center;padding:0 16px 0 5px}
.address i{width:24px;height:24px;border-radius:50%;background:#513438;display:grid;place-items:center}
.url{font-size:13.5px;letter-spacing:-.13px;color:#eee0e1;margin-left:8px}
.actions{margin-left:auto;display:flex;gap:16px;align-items:center}
.avatar{width:20px;height:20px;border-radius:50%;background:#7e57c2;margin-left:16px;font:11px/20px Roboto,sans-serif;text-align:center;color:#fff}
.dots{margin-left:24px}
.bookmarks{height:28px;padding-left:19px;display:grid;grid-template-columns:45px 50px 58px 63px 82px 98px 74px 79px 66px 95px 68px 76px 85px 86px 81px 27px 130px;align-items:center;font-size:12px}
.bookmarks a{display:flex;align-items:center;white-space:nowrap}
.bookmarks span{margin-left:6px;line-height:18px;letter-spacing:-.24px;color:#dccccd}
.bookmarks .apps{border-right:1px solid #745559;margin-right:16px;height:16px}
.bookmarks .all{border-left:1px solid #745559;padding-left:17px;height:16px}
.bookmarks .all span{margin-left:7px;letter-spacing:-.45px}
.viewport{height:596px;display:flex}
main{width:1265px;height:596px;overflow:hidden}
nav{height:71px;background:#020d18;display:grid;grid-template-columns:60px 118px 74px 134px 116px 108px;column-gap:38.2px;justify-content:center;align-items:center}
nav a{height:34px;border-radius:17px;background:#e94e3d;color:#fff;display:grid;place-items:center;font-size:11.2px;letter-spacing:-.3px;font-weight:500}
nav .dark{background:#0d2535}
.card{width:759px;height:481px;margin:10px auto 0;background:#fff;border-radius:6px;overflow:hidden;box-shadow:0 2px 9px #0002}
.cardhead{height:54px;display:flex;align-items:center;padding:18px 26px 0 25px;color:#06131f}
h1{font-size:22.2px;line-height:28px;font-weight:600;letter-spacing:-.6px;margin:0 auto 0 0}
h1 small{font:bold 12px "Liberation Serif",serif;letter-spacing:0}
label{font-size:13.2px;font-weight:500;letter-spacing:-.28px}
.select{width:96px;height:33px;margin:1px 0 0 13px;border:1px solid #4e83b5;border-radius:4px;box-shadow:0 0 0 2px #d9eaf8;display:flex;align-items:center;justify-content:space-between;padding:0 12px 0 16px;font-size:13.2px;letter-spacing:-.1px;color:#3d4a5c}
.map{width:759px;height:427px;background:#f4f4f4}
.land path{stroke:#f7aaa2;stroke-width:1}
.c path,path.c,.land path.c{fill:#a90f16}
.a path,.land path.a{fill:#ba141a}
.e path,.land path.e{fill:#f24633}
.gl path,.land path.gl{fill:#fc644a}
.ru path,.land path.ru{fill:#900a13}
.land path.us{fill:#7c0610}
.land path.ch{fill:#67000d}
.land path.b{fill:#d92523}
.land path.e2{fill:#df2b25}
.land path.grey{fill:#ddd}
.land path.f{fill:#f4f4f4;stroke:none}
.land .isle path{stroke:#a90f16;stroke-width:2}
.pins{fill:none;stroke:#fff;stroke-width:4}
.pins path{stroke:none}
.sm{marker-start:url(#s);marker-mid:url(#s);marker-end:url(#s)}
.md{marker-start:url(#m);marker-mid:url(#m);marker-end:url(#m)}
.islands{stroke:#dd3932;stroke-width:1.6;stroke-linecap:round}
.antarctic{stroke:#ccc;stroke-width:.7}
.legendtitle{font-size:9.6px;font-weight:700}
.sub{font:bold 6px "Liberation Serif",serif}
.ticks{font-size:8px;fill:#222}
.scrollbar{width:15px;background:#292929;display:flex;flex-direction:column;align-items:center}
.scrollbar .up{border:4px solid transparent;border-bottom:5px solid #9b9b9b;margin-top:1px}
.scrollbar .thumb{width:9px;height:57px;background:#9b9b9b;border-radius:5px;margin-top:62px}
.scrollbar .down{border:4px solid transparent;border-top:5px solid #9b9b9b;margin-top:auto;margin-bottom:1px}
.edge{height:2px;background:linear-gradient(90deg,#24272d 448px,#787a7d 448px 498px,#24272d 498px)}
```
